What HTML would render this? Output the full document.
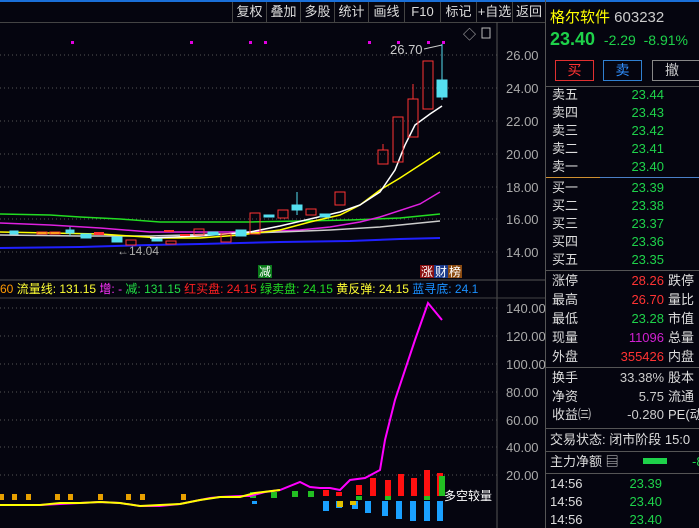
<!DOCTYPE html>
<html><head><meta charset="utf-8"><style>
*{margin:0;padding:0;box-sizing:border-box}
body{width:699px;height:528px;background:#05050f;overflow:hidden;position:relative;font-family:"Liberation Sans","Noto Sans CJK SC",sans-serif;color:#c8c8c8}
.a{position:absolute;white-space:nowrap}
.tb{position:absolute;top:2px;height:20px;font-size:13px;color:#ddd;line-height:20px;text-align:center;border-left:1px solid #444}
.rp{position:absolute;left:545px;top:0;width:154px;height:528px;border-left:1px solid #555}
.r{position:absolute;left:6px;font-size:13px;color:#ddd;line-height:16px}
.v{position:absolute;font-size:13px;line-height:16px;text-align:right}
.g{color:#1ed24a}.rd{color:#ff3333}
.hl{position:absolute;left:0;width:154px;height:1px;background:#555}
</style></head><body>
<div class="a" style="left:0;top:0;width:699px;height:2px;background:#1a6fd8"></div>
<div class="a" style="left:0;top:22px;width:545px;height:1px;background:#444"></div>
<div class="tb" style="left:232px;width:34px">复权</div>
<div class="tb" style="left:266px;width:34px">叠加</div>
<div class="tb" style="left:300px;width:34px">多股</div>
<div class="tb" style="left:334px;width:34px">统计</div>
<div class="tb" style="left:368px;width:36px">画线</div>
<div class="tb" style="left:404px;width:36px">F10</div>
<div class="tb" style="left:440px;width:36px">标记</div>
<div class="tb" style="left:476px;width:36px">+自选</div>
<div class="tb" style="left:512px;width:33px">返回</div>
<svg class="a" style="left:0;top:0" width="545" height="528">
<line x1="497" y1="22" x2="497" y2="528" stroke="#555"/>
<line x1="0" y1="280" x2="545" y2="280" stroke="#555"/>
<line x1="0" y1="298" x2="545" y2="298" stroke="#444"/>
<g stroke="#555" stroke-dasharray="1,3">
<line x1="0" y1="55" x2="497" y2="55"/><line x1="0" y1="88" x2="497" y2="88"/><line x1="0" y1="121" x2="497" y2="121"/><line x1="0" y1="154" x2="497" y2="154"/><line x1="0" y1="187" x2="497" y2="187"/><line x1="0" y1="219" x2="497" y2="219"/><line x1="0" y1="252" x2="497" y2="252"/>
<line x1="0" y1="308" x2="497" y2="308"/><line x1="0" y1="336" x2="497" y2="336"/><line x1="0" y1="364" x2="497" y2="364"/><line x1="0" y1="392" x2="497" y2="392"/><line x1="0" y1="420" x2="497" y2="420"/><line x1="0" y1="447" x2="497" y2="447"/><line x1="0" y1="475" x2="497" y2="475"/>
</g>
<g font-size="13" fill="#aaa" font-family="Liberation Sans">
<text x="506" y="60">26.00</text><text x="506" y="93">24.00</text><text x="506" y="126">22.00</text><text x="506" y="159">20.00</text><text x="506" y="192">18.00</text><text x="506" y="224">16.00</text><text x="506" y="257">14.00</text>
<text x="506" y="313">140.00</text><text x="506" y="341">120.00</text><text x="506" y="369">100.00</text><text x="506" y="397">80.00</text><text x="506" y="425">60.00</text><text x="506" y="452">40.00</text><text x="506" y="480">20.00</text>
</g>
<g fill="#e000e0"><rect x="71" y="41" width="3" height="3"/><rect x="190" y="41" width="3" height="3"/><rect x="249" y="41" width="3" height="3"/><rect x="264" y="41" width="3" height="3"/><rect x="368" y="41" width="3" height="3"/><rect x="397" y="41" width="3" height="3"/><rect x="427" y="41" width="3" height="3"/><rect x="442" y="41" width="3" height="3"/></g>
<text x="390" y="54" font-size="13" fill="#ccc">26.70</text>
<polyline points="424,49 442,45" stroke="#ccc" fill="none"/>
<text x="463" y="39" font-size="13" fill="#bbb">◇</text>
<rect x="482" y="28" width="8" height="10" fill="none" stroke="#bbb"/>
<polyline points="0,214 50,215 80,217 120,219 160,222 250,222 300,221 350,220 400,218 440,214" stroke="#22dd22" fill="none" stroke-width="1.5"/>
<polyline points="0,223 50,225 100,228 150,232 200,232 250,232 300,230 330,227 360,222 380,217 420,204 440,192" stroke="#e020e0" fill="none" stroke-width="1.5"/>
<polyline points="0,235 80,236 150,236 220,234 280,232 330,230 380,227 440,221" stroke="#ccc" fill="none" stroke-width="1.5"/>
<polyline points="0,248 80,247 150,245 200,244 280,242 350,241 400,239 440,238" stroke="#2020ff" fill="none" stroke-width="2"/>
<polyline points="0,232 100,234 160,238 200,238 240,235 280,230 310,222 340,215 360,205 380,190 400,178 420,165 440,152" stroke="#ffff00" fill="none" stroke-width="1.5"/>
<polyline points="150,238 200,236 250,232 280,226 310,219 340,212 360,205 380,192 395,170 405,145 415,125 430,114 442,106" stroke="#fff" fill="none" stroke-width="1.5"/>
<g fill="#55e0f0" stroke="#55e0f0">
<rect x="10" y="231" width="8" height="3"/><rect x="66" y="230" width="8" height="3"/><line x1="70" y1="227" x2="70" y2="236"/><rect x="81" y="234" width="10" height="4"/><rect x="112" y="237" width="10" height="5"/><rect x="152" y="239" width="10" height="2"/><rect x="208" y="232" width="10" height="3"/><rect x="236" y="230" width="10" height="6"/><rect x="264" y="215" width="10" height="2"/><rect x="292" y="205" width="10" height="5"/><line x1="297" y1="192" x2="297" y2="215"/><rect x="320" y="214" width="10" height="3"/><rect x="437" y="80" width="10" height="17"/><line x1="442" y1="44" x2="442" y2="100"/>
</g>
<g fill="none" stroke="#ff3333">
<rect x="37" y="232" width="10" height="2"/><rect x="50" y="232" width="10" height="2"/><rect x="126" y="240" width="10" height="5"/><rect x="166" y="241" width="10" height="3"/><rect x="194" y="229" width="10" height="6"/><rect x="221" y="234" width="10" height="8"/><rect x="250" y="213" width="10" height="21"/><rect x="278" y="210" width="10" height="8"/><rect x="306" y="209" width="10" height="6"/><rect x="335" y="192" width="10" height="13"/>
<rect x="378" y="150" width="10" height="14"/><line x1="383" y1="144" x2="383" y2="150"/><rect x="393" y="117" width="10" height="45"/><rect x="408" y="99" width="10" height="38"/><line x1="413" y1="84" x2="413" y2="99"/><rect x="423" y="61" width="10" height="48"/>
</g>
<rect x="94" y="232" width="10" height="3" fill="#ff3333"/><rect x="180" y="234" width="10" height="2" fill="#ff3333"/><rect x="164" y="230" width="10" height="2" fill="#ff3333"/>
<text x="117" y="255" font-size="12" fill="#aaa">←14.04</text>
<rect x="258" y="265" width="14" height="13" fill="#0a7a1a"/><text x="259" y="276" font-size="12" fill="#fff">减</text>
<rect x="420" y="265" width="14" height="13" fill="#8a1010"/><text x="421" y="276" font-size="12" fill="#fff">涨</text>
<rect x="434" y="265" width="14" height="13" fill="#1a3a8a"/><text x="435" y="276" font-size="12" fill="#fff">财</text>
<rect x="448" y="265" width="14" height="13" fill="#8a4a10"/><text x="449" y="276" font-size="12" fill="#fff">榜</text>
<g fill="#ff1010"><rect x="356" y="485" width="6" height="10"/><rect x="370" y="478" width="6" height="18"/><rect x="385" y="480" width="6" height="16"/><rect x="398" y="474" width="6" height="22"/><rect x="411" y="478" width="6" height="18"/><rect x="424" y="470" width="6" height="26"/><rect x="437" y="473" width="6" height="23"/><rect x="323" y="490" width="6" height="6"/><rect x="336" y="492" width="6" height="4"/></g>
<g fill="#22c022"><rect x="356" y="496" width="6" height="4"/><rect x="385" y="496" width="6" height="4"/><rect x="424" y="496" width="6" height="4"/><rect x="439" y="476" width="6" height="20"/><rect x="308" y="491" width="6" height="6"/><rect x="271" y="492" width="6" height="6"/><rect x="250" y="492" width="6" height="6"/><rect x="292" y="491" width="6" height="6"/></g>
<g fill="#1aa0ff"><rect x="323" y="501" width="6" height="10"/><rect x="336" y="501" width="6" height="7"/><rect x="365" y="501" width="6" height="12"/><rect x="382" y="501" width="6" height="15"/><rect x="396" y="501" width="6" height="18"/><rect x="410" y="501" width="6" height="20"/><rect x="424" y="501" width="6" height="20"/><rect x="437" y="501" width="6" height="20"/><rect x="352" y="501" width="6" height="8"/><rect x="252" y="501" width="5" height="3"/></g>
<g fill="#e0c000"><rect x="337" y="501" width="6" height="6"/><rect x="350" y="501" width="6" height="4"/></g>
<g fill="#e8a000"><rect x="0" y="494" width="4" height="6"/><rect x="12" y="494" width="5" height="6"/><rect x="26" y="494" width="5" height="6"/><rect x="55" y="494" width="5" height="6"/><rect x="68" y="494" width="5" height="6"/><rect x="98" y="494" width="5" height="6"/><rect x="126" y="494" width="5" height="6"/><rect x="140" y="494" width="5" height="6"/><rect x="181" y="494" width="5" height="6"/></g>
<polyline points="0,505 40,505 60,504 80,503 100,502 120,503 140,506 160,506 180,504 200,500 210,498 220,497 240,496 250,496 265,492 280,490 300,482 310,487 320,488 330,488 340,490 350,480 365,478 380,470 385,440 395,400 415,340 428,303 442,320" stroke="#ff00ff" fill="none" stroke-width="2"/>
<polyline points="0,505 40,505 60,503 80,503 100,502 120,503 140,506 160,505 180,504 200,500 220,497 240,497 255,493 280,490" stroke="#ffff00" fill="none" stroke-width="2"/>
<text x="444" y="500" font-size="12" fill="#fff">多空较量</text>
</svg>
<div class="a" style="left:0;top:281px;font-size:12px;line-height:16px"><span style="color:#ff9900">60 </span><span style="color:#ffff33">流量线: 131.15 </span><span style="color:#ff33ff">增: - </span><span style="color:#22dd44">减: 131.15 </span><span style="color:#ff2020">红买盘: 24.15 </span><span style="color:#22dd22">绿卖盘: 24.15 </span><span style="color:#ffff33">黄反弹: 24.15 </span><span style="color:#1a90ff">蓝寻底: 24.1</span></div>
<div class="rp">
<div class="a" style="left:4px;top:6px;font-size:15px;color:#ffff00">格尔软件 <span style="color:#ccc">603232</span></div>
<div class="a" style="left:4px;top:29px;font-size:18px;font-weight:bold;color:#1ed24a">23.40 <span style="font-size:14px;font-weight:normal">&nbsp;-2.29 &nbsp;-8.91%</span></div>
<div class="a" style="left:9px;top:60px;width:39px;height:21px;border:1px solid #e03030;color:#ff3333;font-size:14px;text-align:center;line-height:19px">买</div>
<div class="a" style="left:57px;top:60px;width:39px;height:21px;border:1px solid #3080d0;color:#3090ff;font-size:14px;text-align:center;line-height:19px">卖</div>
<div class="a" style="left:106px;top:60px;width:48px;height:21px;border:1px solid #888;border-right:none;color:#ccc;font-size:14px;padding-left:12px;line-height:19px">撤</div>
<div class="hl" style="top:86px"></div>
<div class="r" style="top:87px">卖五</div><div class="v g" style="left:60px;width:58px;top:87px">23.44</div>
<div class="r" style="top:105px">卖四</div><div class="v g" style="left:60px;width:58px;top:105px">23.43</div>
<div class="r" style="top:123px">卖三</div><div class="v g" style="left:60px;width:58px;top:123px">23.42</div>
<div class="r" style="top:141px">卖二</div><div class="v g" style="left:60px;width:58px;top:141px">23.41</div>
<div class="r" style="top:159px">卖一</div><div class="v g" style="left:60px;width:58px;top:159px">23.40</div>
<div class="hl" style="top:177px;background:#4a80c8"></div><div class="a" style="left:0;top:177px;width:54px;height:1px;background:#d09030"></div>
<div class="r" style="top:180px">买一</div><div class="v g" style="left:60px;width:58px;top:180px">23.39</div>
<div class="r" style="top:198px">买二</div><div class="v g" style="left:60px;width:58px;top:198px">23.38</div>
<div class="r" style="top:216px">买三</div><div class="v g" style="left:60px;width:58px;top:216px">23.37</div>
<div class="r" style="top:234px">买四</div><div class="v g" style="left:60px;width:58px;top:234px">23.36</div>
<div class="r" style="top:252px">买五</div><div class="v g" style="left:60px;width:58px;top:252px">23.35</div>
<div class="hl" style="top:270px"></div>
<div class="r" style="top:273px">涨停</div><div class="v rd" style="left:60px;width:58px;top:273px">28.26</div><div class="r" style="left:122px;top:273px">跌停</div>
<div class="r" style="top:292px">最高</div><div class="v rd" style="left:60px;width:58px;top:292px">26.70</div><div class="r" style="left:122px;top:292px">量比</div>
<div class="r" style="top:311px">最低</div><div class="v g" style="left:60px;width:58px;top:311px">23.28</div><div class="r" style="left:122px;top:311px">市值</div>
<div class="r" style="top:330px">现量</div><div class="v" style="left:60px;width:58px;top:330px;color:#d020d0">11096</div><div class="r" style="left:122px;top:330px">总量</div>
<div class="r" style="top:349px">外盘</div><div class="v rd" style="left:60px;width:58px;top:349px">355426</div><div class="r" style="left:122px;top:349px">内盘</div>
<div class="hl" style="top:367px"></div>
<div class="r" style="top:370px">换手</div><div class="v" style="left:60px;width:58px;top:370px;color:#ccc">33.38%</div><div class="r" style="left:122px;top:370px">股本</div>
<div class="r" style="top:389px">净资</div><div class="v" style="left:60px;width:58px;top:389px;color:#ccc">5.75</div><div class="r" style="left:122px;top:389px">流通</div>
<div class="r" style="top:407px">收益㈢</div><div class="v" style="left:60px;width:58px;top:407px;color:#ccc">-0.280</div><div class="r" style="left:122px;top:407px">PE(动</div>
<div class="hl" style="top:428px"></div>
<div class="r" style="left:4px;top:432px">交易状态: 闭市阶段 15:0</div>
<div class="hl" style="top:451px"></div>
<div class="r" style="left:4px;top:454px">主力净额 ▤</div>
<div class="a" style="left:97px;top:458px;width:24px;height:6px;background:#1ed24a"></div>
<div class="a g" style="left:146px;top:454px;font-size:13px">-8</div>
<div class="hl" style="top:473px"></div>
<div class="r" style="left:4px;top:476px">14:56</div><div class="v g" style="left:60px;width:56px;top:476px">23.39</div>
<div class="r" style="left:4px;top:494px">14:56</div><div class="v g" style="left:60px;width:56px;top:494px">23.40</div>
<div class="r" style="left:4px;top:512px">14:56</div><div class="v g" style="left:60px;width:56px;top:512px">23.40</div>
</div>
</body></html>
